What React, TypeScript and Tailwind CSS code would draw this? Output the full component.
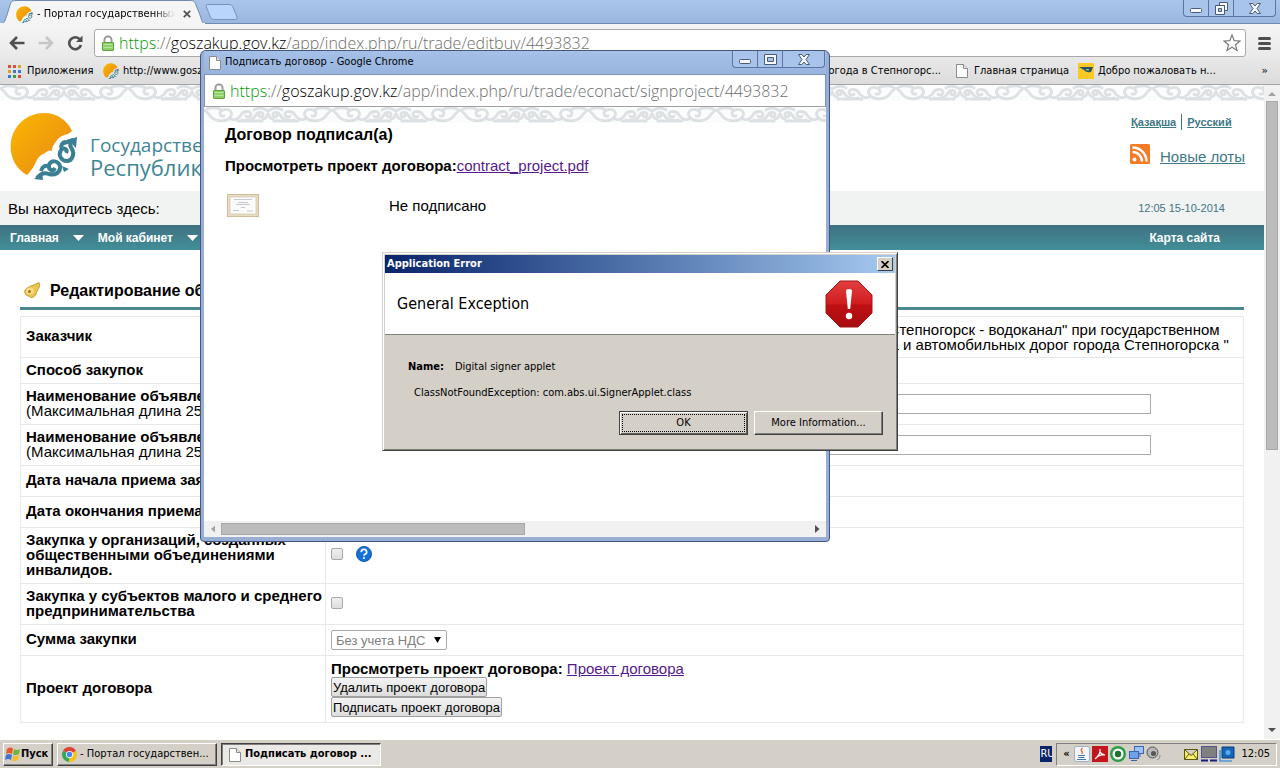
import React from 'react';

const UI_FONT = "font-['DejaVu_Sans_Condensed','DejaVu_Sans',sans-serif] text-[11px]";
const PAGE_FONT = "font-['Liberation_Sans',sans-serif] text-[15px] leading-[15px]";

interface LogoProps {
  className: string;
}

// Orange disc with the teal ornament in the lower right part
const Logo: React.FC<LogoProps> = ({ className }) => (
  <svg className={className} viewBox="0 0 68 68">
    <defs>
      <linearGradient id="sun" x1="0" y1="0" x2="1" y2="1">
        <stop offset="0" stopColor="#f9b800" />
        <stop offset="0.6" stopColor="#f09a0d" />
        <stop offset="1" stopColor="#e07a1a" />
      </linearGradient>
    </defs>
    <path
      d="M17 63 C4 56 -1 42 1 29 C4 13 17 1 34 1 C47 1 57 8 62 19 L58 22 C53 23 49 25 47 28 C45 31 42 34 42 39 C38 37 36 41 33 42 C28 44 26 50 24 54 C22 57 20 60 17 63 Z"
      fill="url(#sun)"
    />
    <path
      d="M64 28 C60 30 59 33 62 37 C65 42 62 49 57 49 C51 49 48 43 51 38 C54 35 58 37 56 41 M54 31 L63 28 M52 37 C50 34 52 31 55 30 M27 66 C30 62 34 60 39 62 C45 64 51 60 50 54 C48 48 41 48 39 53 C38 58 43 60 45 56 M31 59 C32 55 35 53 38 54"
      fill="none"
      stroke="#3b7f93"
      strokeWidth="4"
    />
    <path d="M24 67 L32 60 L33 68 Z M52 54 L59 57 L54 60 Z M58 28 L67 25 L66 36 Z" fill="#3b7f93" />
  </svg>
);

const PageIcon = () => (
  <svg className="w-3 h-[14px] shrink-0" viewBox="0 0 12 14">
    <path d="M0.5 0.5 H7.5 L11.5 4.5 V13.5 H0.5 Z" fill="#fff" stroke="#8b8b8b" />
    <path d="M7.5 0.5 V4.5 H11.5" fill="#e6e6e6" stroke="#8b8b8b" />
  </svg>
);

const LockIcon = () => (
  <svg className="w-3 h-4 shrink-0" viewBox="0 0 12 16">
    <path d="M2.5 8 V5 A3.5 3.5 0 0 1 9.5 5 V8" fill="none" stroke="#8d8d8d" strokeWidth="2" />
    <path d="M3 8 V5 A3 3 0 0 1 9 5 V8" fill="none" stroke="#d8d8d8" strokeWidth="0.6" />
    <rect x="0.5" y="7.5" width="11" height="8" rx="0.5" fill="#8fd06b" stroke="#5aa53a" />
    <path d="M1.5 9.5 H10.5 M1.5 12.5 H10.5" stroke="#b5e59a" />
  </svg>
);

const Ornament = ({ id }: { id: string }) => (
  <svg className="block w-full h-4">
    <defs>
      <g id={`${id}-half`} fill="none" stroke="#dde1e4" strokeWidth="2.8" strokeLinecap="round">
        <path d="M0 3 C3 4 5 8 8 11 C13 15 24 15 27 9 C29 4 24 1 19 3 C14 5 16 10 20 9 M18 3 C12 0 6 1 3 2" />
        <path d="M27 12 C31 14 35 11 37 8 C39 4 46 3 47 7 C47 10 43 11 42 9 M38 13 C44 15 50 12 52 8 C54 4 60 5 59 8 C58 11 55 10 55 8" />
        <path d="M34 14 H58 M50 3 C54 0 60 1 64 4 M59 12 C61 12 63 9 64 7" />
      </g>
      <pattern id={id} width="128" height="16" patternUnits="userSpaceOnUse">
        <rect width="128" height="16" fill="#fbfcfc" />
        <use href={`#${id}-half`} />
        <use href={`#${id}-half`} transform="translate(128 0) scale(-1 1)" />
      </pattern>
    </defs>
    <rect width="100%" height="16" fill={`url(#${id})`} />
  </svg>
);

const WindowControls = ({ restore }: { restore?: boolean }) => (
  <div className="flex h-[17px] self-start rounded-b border border-t-0 border-[#5a74a3] bg-[#a9c4ea] divide-x divide-[#5a74a3]">
    <button aria-label="Свернуть" className="w-[25px] flex items-center justify-center">
      <svg className="w-3 h-3" viewBox="0 0 12 12">
        <rect x="0.5" y="6.5" width="11" height="4" rx="1" fill="#f5f8fd" stroke="#4c5a78" />
      </svg>
    </button>
    <button aria-label="Развернуть" className="w-[25px] flex items-center justify-center">
      <svg className="w-[13px] h-[13px]" viewBox="0 0 13 13" fill="#f5f8fd" stroke="#4c5a78">
        {restore ? (
          <>
            <path d="M4.5 0.5 H12.5 V8.5 H9.5 V3.5 H4.5 Z" />
            <path d="M0.5 3.5 H9.5 V12.5 H0.5 Z M3.5 6.5 H6.5 V9.5 H3.5 Z" fillRule="evenodd" />
          </>
        ) : (
          <path d="M0.5 1.5 H12.5 V11.5 H0.5 Z M3.5 4.5 H9.5 V8.5 H3.5 Z" fillRule="evenodd" />
        )}
      </svg>
    </button>
    <button aria-label="Закрыть" className="w-[41px] flex items-center justify-center">
      <svg className="w-3 h-[11px]" viewBox="0 0 12 11">
        <path
          d="M0.5 0.5 H3.8 L6 3 L8.2 0.5 H11.5 L8 5.5 L11.5 10.5 H8.2 L6 8 L3.8 10.5 H0.5 L4 5.5 Z"
          fill="#f5f8fd"
          stroke="#4c5a78"
        />
      </svg>
    </button>
  </div>
);

const Url = ({ path }: { path: string }) => (
  <div
    role="textbox"
    aria-label="Адрес"
    className="font-['Open_Sans',sans-serif] font-light text-[16px] leading-5 whitespace-nowrap text-[#6e6e6e]"
  >
    <span className="text-[#0a9a0a]">https</span>://<span className="text-black">goszakup.gov.kz</span>
    {path}
  </div>
);

const TabStrip = () => (
  <div className="flex h-6 bg-linear-to-b from-[#aac5ea] to-[#9bb7df] border-b border-[#7289b0]">
    <div className="relative w-[205px] h-6">
      <svg className="absolute inset-0 w-full h-full" viewBox="0 0 205 24">
        <path
          d="M0 24 C5 24 5 20 7 15 L10 5 C11 2 12 0.5 16 0.5 H190 C194 0.5 195 2 196 5 L200 15 C202 21 202 24 206 24 Z"
          fill="#f5f5f5"
          stroke="#7289b0"
        />
        <rect x="0" y="23" width="205" height="2" fill="#f3f3f3" />
      </svg>
      <div className="relative flex items-center h-6 pl-4 pt-1">
        <Logo className="w-[17px] h-[17px] shrink-0" />
        <button role="tab" className="w-[138px] ml-1 text-left whitespace-nowrap overflow-hidden mask-r-from-85%">
          - Портал государственных закупок
        </button>
        <button aria-label="Закрыть вкладку" className="ml-2">
          <svg className="w-2 h-2" viewBox="0 0 8 8">
            <path d="M0.8 0.8 L7.2 7.2 M7.2 0.8 L0.8 7.2" stroke="#555" strokeWidth="1.8" />
          </svg>
        </button>
      </div>
    </div>
    <button aria-label="Новая вкладка" className="self-center">
      <svg className="w-[33px] h-4" viewBox="0 0 33 16">
        <path
          d="M1 2 C1 0.5 2 0.5 3 0.5 H24 C26 0.5 27 1.5 28 3 L32 13 C32.500 15 32 15.500 30 15.500 H9 C7 15.500 6 14 5 12 Z"
          fill="#b9d5fa"
          stroke="#7b93bb"
        />
      </svg>
    </button>
    <div className="grow" />
    <div className="mr-1">
      <WindowControls restore />
    </div>
  </div>
);

const Toolbar = () => (
  <div className="flex items-center h-[34px] pt-1 pl-[9px] pr-2 bg-linear-to-b from-[#f5f5f5] to-[#e9e9e9]">
    <div className="flex items-center gap-[13px] w-[85px]">
      <button aria-label="Назад">
        <svg className="w-4 h-[14px]" viewBox="0 0 16 14" fill="none" stroke="#505050" strokeWidth="2.6">
          <path d="M15.500 7 H2.500 M8 1 L2 7 L8 13" />
        </svg>
      </button>
      <button aria-label="Вперёд">
        <svg className="w-4 h-[14px]" viewBox="0 0 16 14" fill="none" stroke="#c6c6c6" strokeWidth="2.6">
          <path d="M0.500 7 H13.500 M8 1 L14 7 L8 13" />
        </svg>
      </button>
      <button aria-label="Обновить">
        <svg className="w-4 h-4" viewBox="0 0 16 16">
          <path d="M13 4.500 A6 6 0 1 0 14 10" fill="none" stroke="#505050" strokeWidth="2.600" />
          <path d="M15.500 0.500 V7 H9 Z" fill="#505050" />
        </svg>
      </button>
    </div>
    <div className="flex items-center grow h-7 pl-[7px] pr-1 gap-[5px] bg-white border border-[#a8a8a8] rounded-[3px]">
      <LockIcon />
      <Url path="/app/index.php/ru/trade/editbuy/4493832" />
      <button aria-label="Добавить в закладки" className="ml-auto">
        <svg className="w-[18px] h-[18px]" viewBox="0 0 18 18">
          <path
            d="M9 1 L11.200 6.600 L17 7 L12.500 10.700 L14 16.500 L9 13.300 L4 16.500 L5.500 10.700 L1 7 L6.800 6.600 Z"
            fill="#fff"
            stroke="#7a7a7a"
            strokeWidth="1.200"
          />
        </svg>
      </button>
    </div>
    <button aria-label="Меню" className="ml-3 mr-px flex flex-col gap-0.5">
      <span className="block w-[13px] h-[3px] rounded-sm bg-[#4f4f4f]" />
      <span className="block w-[13px] h-[3px] rounded-sm bg-[#4f4f4f]" />
      <span className="block w-[13px] h-[3px] rounded-sm bg-[#4f4f4f]" />
    </button>
  </div>
);

const BookmarksBar = () => (
  <div className="flex items-center h-[27px] pl-2 pr-3 border-b border-[#a5a5a5] bg-linear-to-b from-[#e8e8e8] to-[#dcdcdc] whitespace-nowrap">
    <a href="#apps" className="flex items-center gap-1.5 w-[95px]">
      <svg className="w-[13px] h-[13px] shrink-0" viewBox="0 0 13 13">
        <path d="M0 0h3v3h-3z M5 0h3v3h-3z" fill="#dd4b39" />
        <path d="M10 0h3v3h-3z M0 5h3v3h-3z" fill="#d9a02c" />
        <path d="M5 5h3v3h-3z M10 5h3v3h-3z M0 10h3v3h-3z" fill="#3a78c9" />
        <path d="M5 10h3v3h-3z" fill="#3f9c45" />
        <path d="M10 10h3v3h-3z" fill="#dd4b39" />
      </svg>
      Приложения
    </a>
    <a href="#goszakup" className="flex items-center gap-1 w-[700px]">
      <Logo className="w-4 h-4 shrink-0" />
      http://www.goszakup.gov.kz
    </a>
    <a href="#weather" className="flex items-center gap-1.5 w-[153px]">
      <PageIcon />
      Погода в Степногорс...
    </a>
    <a href="#home" className="flex items-center gap-1.5 w-[122px]">
      <PageIcon />
      Главная страница
    </a>
    <a href="#welcome" className="flex items-center gap-1">
      <svg className="w-4 h-4 shrink-0" viewBox="0 0 16 16">
        <rect width="16" height="16" fill="#fbc926" />
        <path d="M1 4 H15 L13 9 Q8 10 6 7 Z" fill="#2c5561" />
        <path d="M8 6 h3 v1.500 h-3z" fill="#8fb5a5" />
      </svg>
      Добро пожаловать н...
    </a>
    <button aria-label="Другие закладки" className="ml-auto font-bold text-[#444]">
      »
    </button>
  </div>
);

const NavArrow = () => (
  <svg className="w-[11px] h-[6px]" viewBox="0 0 11 6">
    <path d="M0 0 H11 L5.500 6 Z" fill="#fff" />
  </svg>
);

const SiteHeader = () => (
  <header>
    <Ornament id="top" />
    <div className="flex justify-between h-[90px] pl-[10px] pr-5">
      <div className="flex gap-3 pt-[11px]">
        <Logo className="w-[68px] h-[68px] shrink-0" />
        <div className="pt-[22px] font-['Open_Sans',sans-serif] text-[#3f8696] whitespace-nowrap">
          <div className="text-[19px] leading-[22px]">Государственные закупки</div>
          <div className="text-[22px] leading-[22px]">Республики Казахстан</div>
        </div>
      </div>
      <div className="flex flex-col w-[114px] pt-[13px] gap-[14px] text-[#3e7787]">
        <div className="flex gap-[5px] pl-px text-[11px] leading-4 font-bold whitespace-nowrap">
          <a href="#kk" className="underline">Қазақша</a>
          <span className="border-l border-[#3e7787]" />
          <a href="#ru" className="underline">Русский</a>
        </div>
        <a href="#lots" className="flex items-end gap-[10px] whitespace-nowrap">
          <svg className="w-5 h-5 shrink-0" viewBox="0 0 20 20">
            <rect width="20" height="20" rx="1.500" fill="#f47b25" />
            <circle cx="4.500" cy="15.500" r="2" fill="#fff" />
            <path d="M2.500 8 A9.500 9.500 0 0 1 12 17.500 M2.500 3.500 A14 14 0 0 1 16.500 17.500" fill="none" stroke="#fff" strokeWidth="2.400" />
          </svg>
          <span className="underline">Новые лоты</span>
        </a>
      </div>
    </div>
    <div className="flex items-center justify-between h-[34px] pl-2 pr-[39px] bg-[#f1f3f3]">
      <span>Вы находитесь здесь:</span>
      <span className="text-[11px] text-[#437485]">12:05 15-10-2014</span>
    </div>
    <nav className="flex items-center h-[25px] pt-px pl-[10px] pr-[44px] gap-[14px] bg-linear-to-b from-[#3f7180] to-[#418f99] text-white text-[12px] font-bold">
      <a href="#main">Главная</a>
      <NavArrow />
      <a href="#cabinet">Мой кабинет</a>
      <NavArrow />
      <a href="#map" className="ml-auto">Карта сайта</a>
    </nav>
  </header>
);

const Row = ({ label, note, id, height, children }: {
  label: string;
  note?: string;
  id?: string;
  height?: string;
  children?: React.ReactNode;
}) => (
  <tr className={height}>
    <th scope="row" className="w-[305px] border border-[#e6e9ea] pl-[5px] pr-0 pt-0 pb-[3px] text-left font-normal">
      <label htmlFor={id} className="font-bold">{label}</label>
      {note && <div className="whitespace-nowrap">{note}</div>}
    </th>
    <td className="border border-[#e6e9ea] px-[5px] py-0">{children}</td>
  </tr>
);

const Check = ({ id }: { id: string }) => (
  <input
    id={id}
    type="checkbox"
    className="block appearance-none w-3 h-3 border border-[#a9a9a9] rounded-xs bg-linear-to-b from-[#efefef] to-[#dedede]"
  />
);

const FORM_BUTTON =
  'h-5 px-px border border-[#a0a0a0] rounded-xs bg-linear-to-b from-[#f3f3f3] to-[#dddddd] text-[13px] whitespace-nowrap';

const PurchaseForm = () => (
  <main className="px-5 pb-4">
    <div className="flex items-center gap-[9px] h-[60px] pt-6 pl-1 border-b-3 border-[#4b878c]">
      <svg className="w-[17px] h-[17px]" viewBox="0 0 17 17">
        <path d="M1 8 C4 4 9 4 15 0.500 C17 5 13 8 12 12 C11 15 7 17 5 14 C2 14 0 11 1 8 Z" fill="#e9c44f" stroke="#c79a35" />
        <ellipse cx="6" cy="9" rx="4" ry="3.500" fill="#f6dd86" />
        <circle cx="5.500" cy="9.500" r="1.500" fill="#a9741f" />
      </svg>
      <h1 className="text-[16px] font-bold">Редактирование объявления</h1>
    </div>
    <table className="w-full mt-[6px] table-fixed border-collapse">
      <tbody>
        <Row label="Заказчик" height="h-[41px]">
          <div className="whitespace-nowrap">
            Государственное коммунальное предприятие правом хозяйственного ведения "Степногорск - водоканал" при государственном
            <br />
            учреждении "Отдел жилищно-коммунального хозяйства, внутреннего транспорта и автомобильных дорог города Степногорска "
          </div>
        </Row>
        <Row label="Способ закупок" height="h-[26px]" />
        <Row label="Наименование объявления (рус)" note="(Максимальная длина 255 символов)" id="name-ru" height="h-[41px]">
          <input id="name-ru" type="text" className="block w-full max-w-[820px] h-5 border border-[#a9a9a9] bg-white" />
        </Row>
        <Row label="Наименование объявления (каз)" note="(Максимальная длина 255 символов)" id="name-kk" height="h-[41px]">
          <input id="name-kk" type="text" className="block w-full max-w-[820px] h-5 border border-[#a9a9a9] bg-white" />
        </Row>
        <Row label="Дата начала приема заявок" height="h-[31px]" />
        <Row label="Дата окончания приема заявок" height="h-[31px]" />
        <Row label="Закупка у организаций, созданных общественными объединениями инвалидов." id="org" height="h-[56px]">
          <div className="flex items-center gap-[13px] pb-[3px]">
            <Check id="org" />
            <svg className="w-4 h-4" viewBox="0 0 18 18">
              <circle cx="9" cy="9" r="8.500" fill="#1470d8" stroke="#0f56ad" />
              <path d="M6 7 A3 2.800 0 1 1 10 9.200 Q9 9.800 9 11" fill="none" stroke="#fff" strokeWidth="1.900" />
              <rect x="8" y="12.500" width="2" height="2" fill="#fff" />
            </svg>
          </div>
        </Row>
        <Row label="Закупка у субъектов малого и среднего предпринимательства" id="small" height="h-[41px]">
          <div className="pb-[3px]">
            <Check id="small" />
          </div>
        </Row>
        <Row label="Сумма закупки" id="sum" height="h-[31px]">
          <div className="relative w-[116px]">
            <select id="sum" className="block appearance-none w-full h-5 pl-1 border border-[#a9a9a9] rounded-xs bg-white text-[13px] text-[#808080]">
              <option>Без учета НДС</option>
            </select>
            <svg className="absolute right-[6px] top-[7px] w-[7px] h-[6px]" viewBox="0 0 8 7">
              <path d="M0 0 H8 L4 7 Z" fill="#000" />
            </svg>
          </div>
        </Row>
        <Row label="Проект договора" height="h-[67px]">
          <div className="flex flex-col items-start pb-px">
            <div className="leading-[17px]">
              <b>Просмотреть проект договора:</b>{' '}
              <a href="#project" className="text-[#551a8b] underline">Проект договора</a>
            </div>
            <button className={FORM_BUTTON}>Удалить проект договора</button>
            <button className={FORM_BUTTON}>Подписать проект договора</button>
          </div>
        </Row>
      </tbody>
    </table>
  </main>
);

const VerticalScrollbar = () => (
  <div className="flex flex-col items-center w-4 shrink-0 bg-[#f1f1f1]">
    <svg className="w-2 h-4" viewBox="0 0 8 16">
      <path d="M0 11 H8 L4 7 Z" fill="#a3a3a3" />
    </svg>
    <div className="w-3 h-[349px] bg-[#bcbcbc] border border-[#a8a8a8]" />
    <svg className="w-2 h-4 mt-auto" viewBox="0 0 8 16">
      <path d="M0 5 H8 L4 9 Z" fill="#505050" />
    </svg>
  </div>
);

const SignWindow = () => (
  <section className="absolute left-[200px] top-[50px] w-[630px] h-[492px] flex flex-col rounded-t-md rounded-b border border-[#43567f] bg-[#98aed5] px-[3px] pb-1">
    <div className="flex h-[23px] pl-[5px] pr-px bg-linear-to-b from-[#a6c1e8] to-[#98b4de]">
      <div className="flex items-center gap-1 grow">
        <PageIcon />
        Подписать договор - Google Chrome
      </div>
      <WindowControls />
    </div>
    <div className="flex items-center h-[33px] shrink-0 pl-2 gap-[5px] border border-[#7f93b8] border-b-[#a0a0a0] bg-white">
      <LockIcon />
      <Url path="/app/index.php/ru/trade/econact/signproject/4493832" />
    </div>
    <div className={`grow flex flex-col bg-white ${PAGE_FONT}`}>
      <Ornament id="popup" />
      <div className="grow pl-[21px] pt-[3px]">
        <h2 className="text-[16px] leading-[17px] font-bold">Договор подписал(а)</h2>
        <p className="mt-[15px]">
          <b>Просмотреть проект договора:</b>
          <a href="#pdf" className="text-[#551a8b] underline">contract_project.pdf</a>
        </p>
        <div className="flex items-center mt-[21px]">
          <svg className="w-8 h-[23px] ml-0.5 mr-[130px]" viewBox="0 0 32 23">
            <rect x="0.500" y="0.500" width="31" height="22" fill="#e8dcc3" stroke="#cdbd9c" />
            <rect x="3" y="3" width="26" height="17" fill="#fbfbfb" stroke="#c9bfa8" strokeWidth="0.600" />
            <path d="M7 5.500 H25 M11 8.500 H21 M9 10.500 H23 M6 16.500 H12 M20 17 H26 M14 13.500 H18" stroke="#b9bcc6" strokeWidth="0.800" />
          </svg>
          <span>Не подписано</span>
        </div>
      </div>
      <div className="flex items-center h-4 bg-[#f1f1f1]">
        <svg className="w-[17px] h-4" viewBox="0 0 17 16">
          <path d="M11 4.500 V11.500 L7 8 Z" fill="#a3a3a3" />
        </svg>
        <div className="w-[304px] h-3 bg-[#bcbcbc] border border-[#a8a8a8]" />
        <svg className="w-4 h-4 ml-auto" viewBox="0 0 16 16">
          <path d="M5 4 V12 L9.500 8 Z" fill="#505050" />
        </svg>
      </div>
    </div>
  </section>
);

const RAISED = 'border border-t-white border-l-white border-b-[#404040] border-r-[#404040] bg-[#d4d0c8]';

const ErrorDialog = () => (
  <section
    role="alertdialog"
    aria-label="Application Error"
    className="absolute left-[382px] top-[252px] w-[516px] h-[199px] flex flex-col p-0.5 border border-t-[#d4d0c8] border-l-[#d4d0c8] border-b-[#404040] border-r-[#404040] bg-[#d4d0c8] shadow-[inset_1px_1px_0_#fff,inset_-1px_-1px_0_#808080]"
  >
    <div className="flex items-center justify-between h-[18px] shrink-0 pl-0.5 pr-0.5 bg-linear-to-r from-[#0a246a] to-[#a6caf0] text-white font-bold">
      Application Error
      <button aria-label="Close" className={`flex items-center justify-center w-4 h-[14px] ${RAISED}`}>
        <svg className="w-2 h-[7px]" viewBox="0 0 8 7">
          <path d="M0.500 0 L7.500 7 M7.500 0 L0.500 7" stroke="#000" strokeWidth="1.600" />
        </svg>
      </button>
    </div>
    <div className="flex items-center justify-between h-[62px] shrink-0 pl-3 pr-[22px] bg-white border-b border-[#808080]">
      <h2 className="text-[16px]">General Exception</h2>
      <svg className="w-12 h-12" viewBox="0 0 48 48">
        <defs>
          <linearGradient id="stop" x1="0" y1="0" x2="0" y2="1">
            <stop offset="0" stopColor="#e0403f" />
            <stop offset="0.500" stopColor="#d01c1f" />
            <stop offset="0.520" stopColor="#bf1014" />
            <stop offset="1" stopColor="#a80c10" />
          </linearGradient>
        </defs>
        <path d="M15 1 H33 L47 15 V33 L33 47 H15 L1 33 V15 Z" fill="url(#stop)" stroke="#a51518" />
        <path d="M21 11 Q21 9 24 9 Q27 9 27 11 L25.200 29 H22.800 Z" fill="#fff" />
        <circle cx="24" cy="36" r="3.200" fill="#fff" />
      </svg>
    </div>
    <dl className="flex gap-[11px] mt-6 pl-[23px] leading-4">
      <dt className="font-bold">Name:</dt>
      <dd>Digital signer applet</dd>
    </dl>
    <p className="mt-[10px] pl-[29px] leading-4">ClassNotFoundException: com.abs.ui.SignerApplet.class</p>
    <div className="flex justify-end gap-[6px] mt-[10px] pr-3">
      <button className="w-[129px] h-6 p-0.5 border border-[#404040] shadow-[inset_1px_1px_0_#fff,inset_-1px_-1px_0_#606060]">
        <span className="flex items-center justify-center h-full border border-dotted border-black">OK</span>
      </button>
      <button className={`w-[129px] h-6 shadow-[inset_-1px_-1px_0_#808080] ${RAISED}`}>More Information...</button>
    </div>
  </section>
);

const Taskbar = () => (
  <footer className="flex items-center h-[29px] shrink-0 pl-[3px] pr-[3px] gap-1 bg-[#d4d0c8] border-t border-white whitespace-nowrap">
    <button className={`flex items-center w-[50px] h-[23px] pl-px font-bold shadow-[inset_-1px_-1px_0_#808080] ${RAISED}`}>
      <svg className="w-4 h-4 shrink-0" viewBox="0 0 16 16">
        <path d="M2 3 Q5 0.500 8 2.500 L7 8 Q4 6 1 8 Z" fill="#e8562a" />
        <path d="M9 3 Q12 5 15 3 L14 8 Q11 10 8 8.500 Z" fill="#6fb43c" />
        <path d="M1 9 Q4 7 7 9 L6 14 Q3 12 0 14 Z" fill="#3f74d1" />
        <path d="M8 9.500 Q11 11 14 9 L13 14 Q10 16 7 14.500 Z" fill="#f3bf2c" />
      </svg>
      Пуск
    </button>
    <button className={`flex items-center gap-[3px] w-40 h-[23px] pl-1 shadow-[inset_-1px_-1px_0_#808080] ${RAISED}`}>
      <svg className="w-[15px] h-[15px] shrink-0" viewBox="0 0 16 16">
        <path d="M8 8 L1.100 4 A8 8 0 0 1 15 4.200 Z" fill="#dc4437" />
        <path d="M8 8 L1.100 4 A8 8 0 0 0 7.500 16 Z" fill="#3aa757" />
        <path d="M8 8 L15 4.200 A8 8 0 0 1 7.500 16 Z" fill="#fbc116" />
        <circle cx="8" cy="8" r="3.800" fill="#fff" />
        <circle cx="8" cy="8" r="2.900" fill="#4587f3" />
      </svg>
      - Портал государствен...
    </button>
    <button className="flex items-center gap-1 w-40 h-[23px] pl-[7px] pt-px font-bold bg-[#ebe9e5] border border-t-[#404040] border-l-[#404040] border-b-white border-r-white shadow-[inset_1px_1px_0_#808080]">
      <PageIcon />
      Подписать договор ...
    </button>
    <span className="ml-auto flex items-center w-3 h-4 leading-4 overflow-hidden bg-[#0a246a] text-white">RU</span>
    <div className="flex items-center h-[23px] pl-[3px] pr-[6px] gap-0.5 border border-t-[#808080] border-l-[#808080] border-b-white border-r-white">
      <button aria-label="Показать скрытые значки" className="w-3 font-bold">«</button>
      <svg className="w-4 h-4" viewBox="0 0 16 16">
        <rect x="0.500" y="0.500" width="15" height="15" rx="1.500" fill="#f2f5f9" stroke="#9fb1c8" />
        <path d="M8.500 2 Q6 4 8 5.500 Q9 7 7.500 8" fill="none" stroke="#e0662b" strokeWidth="1.300" />
        <path d="M4 9.500 H11 M4.500 11.500 H10.500 M3 13.500 H12" stroke="#4a76a8" />
      </svg>
      <svg className="w-4 h-4" viewBox="0 0 16 16">
        <rect width="16" height="16" fill="#c3161c" />
        <path d="M3 13 Q9 8 8 3 Q7 8 13 9 Q7 8 3 13" fill="none" stroke="#fff" strokeWidth="1.200" />
      </svg>
      <svg className="w-4 h-4" viewBox="0 0 16 16">
        <circle cx="8" cy="8" r="8" fill="#2f9d45" />
        <circle cx="8" cy="8" r="5.500" fill="#fff" />
        <circle cx="8" cy="8" r="3.200" fill="#1d6f30" />
      </svg>
      <svg className="w-4 h-4" viewBox="0 0 16 16" stroke="#3c64ae">
        <rect x="6.500" y="0.500" width="9" height="7" fill="#9cc3f4" />
        <rect x="1.500" y="5.500" width="9" height="7" fill="#6fa2ea" />
        <path d="M3 14.500 H9 M12 8 V11" fill="none" />
      </svg>
      <svg className="w-4 h-4" viewBox="0 0 16 16">
        <circle cx="6.500" cy="6.500" r="5.500" fill="#b7b7b7" stroke="#555" />
        <circle cx="7.500" cy="7.500" r="2.500" fill="#555" />
        <path d="M11 14 Q14.500 13 14 9" fill="none" stroke="#888" />
      </svg>
      <svg className="w-[14px] h-[11px] ml-5" viewBox="0 0 14 11">
        <path d="M0.500 0.500 H13.500 V10.500 H0.500 Z M0.500 0.500 L7 6.500 L13.500 0.500 M0.500 10.500 L5 5 M13.500 10.500 L9 5" fill="#f6ef6a" stroke="#5b5612" />
      </svg>
      <svg className="w-4 h-4 ml-px" viewBox="0 0 16 16">
        <rect x="0.500" y="0.500" width="15" height="11" fill="#808080" stroke="#55558a" />
        <path d="M0 14.500 H7 M9 14.500 H16" stroke="#1b1b7a" strokeWidth="2" />
      </svg>
      <svg className="w-4 h-4" viewBox="0 0 16 16">
        <path d="M3 1 H15 V12 H3 Z" fill="#1566b5" stroke="#0b3d78" />
        <path d="M1 4 V15 H13" fill="none" stroke="#4d95d8" strokeWidth="1.600" />
        <circle cx="9" cy="6.500" r="2.500" fill="#5aaaf0" />
      </svg>
      <time className="ml-1">12:05</time>
    </div>
  </footer>
);

export default function App() {
  return (
    <div className={`relative flex flex-col h-screen overflow-hidden bg-white text-black ${UI_FONT}`}>
      <TabStrip />
      <Toolbar />
      <BookmarksBar />
      <div className="flex grow min-h-0">
        <div className={`grow min-w-0 overflow-hidden ${PAGE_FONT}`}>
          <SiteHeader />
          <PurchaseForm />
        </div>
        <VerticalScrollbar />
      </div>
      <Taskbar />
      <SignWindow />
      <ErrorDialog />
    </div>
  );
}
